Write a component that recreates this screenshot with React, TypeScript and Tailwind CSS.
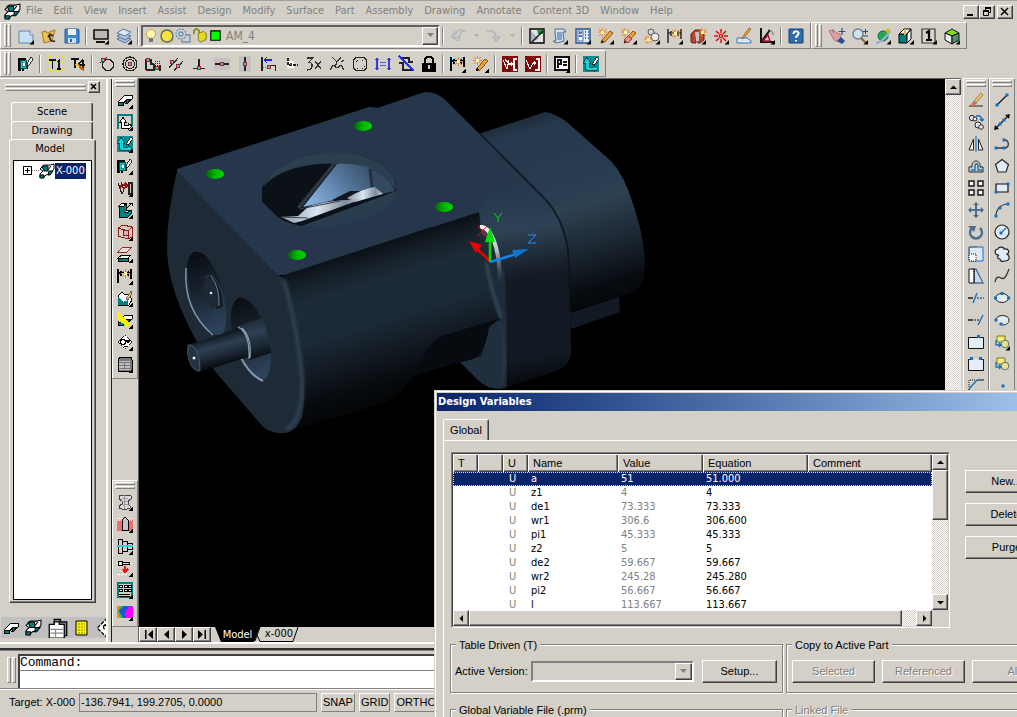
import type { ReactNode } from "react";

const RAISED =
  "border border-t-white border-l-white border-b-[#404040] border-r-[#404040] shadow-[inset_-1px_-1px_0_#808080] bg-[#d4d0c8]";
const CHECKER =
  "bg-[conic-gradient(#fff_25%,#d4d0c8_0_50%,#fff_0_75%,#d4d0c8_0)] bg-[length:2px_2px]";
const UI = "font-['DejaVu_Sans_Condensed','Noto_Sans',sans-serif]";
const SANS = "font-['Liberation_Sans',sans-serif]";

const T = "#008080";
const B = "#1472c4";
const S = "#4a6d94";

const spark = (x: number, y: number) => (
  <g>
    <path
      d={`M${x - 4} ${y}h9M${x} ${y - 4}v9M${x - 3} ${y - 3}l7 7M${x + 4} ${y - 3}l-7 7`}
      stroke="#f08020"
      fill="none"
    />
    <rect x={x - 1} y={y - 1} width="3" height="3" fill="#fff7a0" />
  </g>
);
const dot = (x: number, y: number) => (
  <g>
    <rect x={x - 2} y={y - 2} width="4" height="4" fill="#b02020" />
    <rect x={x - 1} y={y - 1} width="2" height="2" fill="#20d8e0" />
  </g>
);
const pencil = (
  <g>
    <path d="M4 12 12 3l3 2-8 9-4 1z" fill="#f0a030" stroke="#6b4010" strokeWidth=".8" />
    <path d="M3 15l1-3 2 2z" fill="#111" />
  </g>
);
const node = (x: number, y: number) => <rect x={x - 1.5} y={y - 1.5} width="3" height="3" fill={B} />;
const slab = (
  <g stroke="#000">
    <path d="M1 10 8 3h7v4l-3 1-2-1-4 5H1z" fill="#fff" />
    <path d="M1 10h5v3H1zM10 7h4l-3 4h-2z" fill={T} />
  </g>
);

const ICONS: Record<string, ReactNode> = {
  app: (
    <g stroke="#000">
      <path d="M1 6l4-4h6l4-1v5l-4 5-4 1-3 3-3-1v-3l3-3z" fill="#fff" />
      <path d="M3 3h6v5H5zM1 12h4v3H1zM10 8h4l-3 4h-2z" fill={T} />
      <path d="M8 8l4-5" />
    </g>
  ),
  new: (
    <g>
      <path d="M1 3h11l3 4v8H1z" fill="#c9dff2" stroke="#5f86b3" />
      <path d="M12 3v4h3" fill="#fff" stroke="#5f86b3" />
    </g>
  ),
  open: (
    <g>
      <path d="M1 4l4-1 1 2 8-3-3 11-8 2z" fill="#e8bf5a" stroke="#a37a1c" />
      <path d="M14 13c-4 1-6-2-5-5M7 9l2-3 3 2" stroke="#222" fill="none" strokeWidth="1.6" />
    </g>
  ),
  save: (
    <g>
      <path d="M1 1h13l1 1v13H1z" fill="#3f86cf" stroke="#2b5f9b" />
      <path d="M4 1h8v6H4z" fill="#e9f2fb" />
      <path d="M4 10h8v5H4z" fill="#cfdcea" />
      <path d="M6 11h2v3H6z" fill="#2b5f9b" />
    </g>
  ),
  screen: (
    <g>
      <path d="M1 2h14v9H1z" fill="#b8b8b0" stroke="#111" strokeWidth="1.6" />
      <path d="M3 14h9" stroke="#111" strokeWidth="2" />
    </g>
  ),
  layers: (
    <g stroke="#54779f" fill="#a9c3de">
      <path d="M1 11l6-3 8 3-6 4z" />
      <path d="M1 8l6-3 8 3-6 4z" />
      <path d="M1 5l6-4 8 3-6 4z" fill="#dbe8f5" />
    </g>
  ),
  bulb: (
    <g>
      <circle cx="8" cy="6" r="4.5" fill="#fff8b8" stroke="#c9a52a" />
      <path d="M6 10h4v4H6z" fill="#777" />
    </g>
  ),
  sun: (
    <g>
      <path d="M1 1h14v14H1z" fill="#e9c53b" opacity=".5" />
      <circle cx="8" cy="8" r="6" fill="#f9e23c" stroke="#4b6a8a" strokeWidth="1.4" />
    </g>
  ),
  freeze: (
    <g fill="none" stroke="#6f93bb" strokeWidth="1.4">
      <circle cx="6" cy="6" r="5" strokeDasharray="2 1" />
      <circle cx="6" cy="6" r="2" />
      <path d="M11 7h4v7H7v-2" />
    </g>
  ),
  unlock: (
    <g>
      <path d="M1 7V3l3-2 3 2v4" fill="none" stroke="#8a8a10" strokeWidth="2" />
      <path d="M6 6l6-2 3 2v7l-6 3-3-2z" fill="#e4d924" stroke="#77720a" />
    </g>
  ),
  green: <path d="M3 3h10v10H3z" fill="#00ff00" stroke="#000" strokeWidth="1.2" />,
  undo: (
    <path d="M1 9h8M2 9l3-6M2 9l6 4M5 7c2-5 6-6 9-4-4 0-5 4-5 10" fill="none" stroke="#b2b6be" strokeWidth="1.6" />
  ),
  redo: (
    <path d="M1 4c4-3 8-1 9 5M6 9h9M14 9l-5 5M8 9l2 5" fill="none" stroke="#b2b6be" strokeWidth="1.6" />
  ),
  sketch: (
    <g>
      <path d="M1 1h14v14H1z" fill="#e4e4e4" stroke="#000" strokeWidth="1.4" />
      <path d="M2 14V3l8 8z" fill="#aab4bc" />
      <path d="M8 2h6v4H9z" fill="#189a40" />
      <path d="M3 14 14 3" stroke="#111" strokeWidth="1.500" />
    </g>
  ),
  scroll: (
    <g>
      <path d="M3 1h9l2 3h-3l1 9-8 2-3-2h3L3 5z" fill="#cfe0f0" stroke="#4b6a94" />
      <path d="M5 5h5M5 7h5M5 9h5M5 11h5" stroke="#3464a4" />
    </g>
  ),
  calc: (
    <g>
      <path d="M1 1h14v14H1z" fill="#dcebf8" stroke="#27528f" strokeWidth="1.4" />
      <path d="M3 3h5v10H3z" fill="#fff" stroke="#3c6eb0" />
      <path d="M10 4h1M13 4h1M10 7h1M13 7h1M10 10h1M13 10h1M4 5h3M4 8h3" stroke="#1b478a" strokeWidth="1.6" />
    </g>
  ),
  pencilSpark: (
    <g>
      {pencil}
      {spark(4, 4)}
    </g>
  ),
  eraserSpark: (
    <g>
      {pencil}
      <path d="M3 12l4-4 4 3-4 4z" fill="#ef8d8d" stroke="#8a3a3a" />
      {spark(4, 4)}
    </g>
  ),
  gearSpark: (
    <g>
      <circle cx="7" cy="4" r="3" fill="#cfd8e2" stroke="#555" />
      <circle cx="11" cy="9" r="4" fill="#e6ebf0" stroke="#555" />
      {spark(4, 11)}
    </g>
  ),
  dimSpark: (
    <g>
      <path d="M1 1v14M14 1v10M1 5h13M4 3v5M11 3v5" stroke="#000" strokeWidth="1.2" />
      {spark(8, 5)}
    </g>
  ),
  partSpark: (
    <g>
      <path d="M1 14V6l4-4h6l3 4v6l-4 3H8V9L6 8v7H2z" fill="#b5472f" stroke="#6b1e12" />
      <path d="M5 4h4v9H6z" fill="#b9c3cc" />
      {spark(12, 4)}
    </g>
  ),
  burst: (
    <g stroke="#cc1515" fill="none" strokeWidth="1.5">
      <path d="M8 1v4M8 11v4M1 8h4M11 8h4M3 3l3 3M10 10l3 3M13 3l-3 3M6 10l-3 3" />
      <circle cx="8" cy="8" r="1.6" fill="#fff" />
    </g>
  ),
  draft: (
    <g>
      <path d="M1 10h10l4 3v2H1z" fill="#d7e7f6" stroke="#3f78b8" />
      <path d="M6 10 13 0l2 1-7 9-2 1z" fill="#eba74a" stroke="#8a5a18" strokeWidth=".8" />
    </g>
  ),
  compass: (
    <g fill="none">
      <path d="M2 0v14h13M2 14l9-12" stroke="#111" strokeWidth="2" />
      <path d="M4 13l5-6 2 6z" stroke="#b01030" strokeWidth="1.4" />
      <path d="M9 2c4 0 5 3 5 5" stroke="#555" />
    </g>
  ),
  help: (
    <g>
      <path d="M1 1h14v14H1z" fill="#2f6bb0" stroke="#173f74" />
      <path d="M5.500 6c0-4 6-3 5 0-.5 1.500-2.500 1.500-2.500 4M8 12v1.500" fill="none" stroke="#fff" strokeWidth="2" />
    </g>
  ),
  hand: (
    <g>
      <path d="M0 3l2-1 3 3-2-4 5 4 3 1 1 4-3 4-4-2z" fill="#d9a0a0" stroke="#a56a72" strokeWidth=".8" />
      <path d="M8 13l4-4 4 4-3 3z" fill="#27518d" />
      <path d="M13 0v7M9.500 3.500h7" stroke="#33527a" strokeWidth="1.2" />
    </g>
  ),
  zoom: (
    <g>
      <circle cx="6" cy="6" r="5" fill="#cfe4f5" stroke="#70808e" strokeWidth="1.4" />
      <path d="M9 10l5 5" stroke="#a06a2c" strokeWidth="2.4" />
      <path d="M13.500 1v5M11 3.500h5M11 8h5" stroke="#1e4f94" />
    </g>
  ),
  orbit: (
    <g>
      <circle cx="8" cy="8" r="5" fill="#27a55c" stroke="#126b38" />
      <path d="M1 15c4 0 12-7 14-12" fill="none" stroke="#8fb1d6" strokeWidth="2.200" />
      <circle cx="13" cy="3" r="2.400" fill="#d8b32a" />
    </g>
  ),
  shade: (
    <g stroke="#000">
      <path d="M1 6h8v9H1z" fill={T} />
      <path d="M1 6l5-5h7l-4 5zM9 6l4-5v10l-4 4z" fill="#fff" />
      <path d="M7 1v6" stroke="#d8c020" strokeWidth="2" />
    </g>
  ),
  one: (
    <g>
      <path d="M1 1h13v14H1z" fill="#d8d4cc" stroke="#333" strokeWidth="1.2" />
      <path d="M5 5l3-2v9M5 12h6" fill="none" stroke="#000" strokeWidth="2.200" />
    </g>
  ),
  cube: (
    <g stroke="#111">
      <path d="M1 5l7-4 7 4-7 3z" fill="#7fdc1e" />
      <path d="M1 5l7 3v8l-7-4z" fill="#eee" />
      <path d="M8 8l7-3v7l-7 4z" fill="#4f8f70" />
    </g>
  ),
  blockPen: (
    <g>
      <path d="M8 3H1v11h2M9 6v6H5v3" fill="none" stroke="#000" strokeWidth="1.200" />
      <path d="M2 4h6v8H2z" fill="#17c5cf" stroke="#055" />
      <path d="M4 6h3v4H4z" fill="#fff" stroke="#055" strokeWidth=".6" />
      <path d="M9 7l4-6 2 2-4 6-2 1z" fill="#fff" stroke="#000" strokeWidth=".8" />
    </g>
  ),
  t1: (
    <g>
      <path d="M0 1h16M0 15h16M1 0v16M15 0v16" stroke="#e8e020" strokeDasharray="1 2" strokeWidth="2" />
      <path d="M2 4h7M5.500 4v9M10 6l2-2v9M10 13h4" fill="none" stroke="#111" strokeWidth="1.300" />
    </g>
  ),
  t4: (
    <g>
      <path d="M1 3h8M5 3v9M8 9h7M13 4v9M8 9l5-6" fill="none" stroke="#111" strokeWidth="1.300" />
      <path d="M6 8l8 6" stroke="#c25a16" strokeWidth="2.400" />
      <path d="M6 8l3 3" stroke="#e8d020" strokeWidth="1.500" />
    </g>
  ),
  tangent: (
    <g>
      <circle cx="9" cy="9" r="5.500" fill="none" stroke="#222" strokeWidth="1.300" />
      <path d="M1 7l7-6" stroke="#222" />
      {dot(4, 4)}
    </g>
  ),
  concentric: (
    <g>
      <circle cx="8" cy="8" r="7" fill="none" stroke="#222" strokeWidth="1.200" />
      <circle cx="8" cy="8" r="4.400" fill="none" stroke="#222" strokeWidth="1.200" />
      {dot(8, 8)}
    </g>
  ),
  profile: (
    <g>
      <path d="M1 14V4h5v4h3M9 8v6H1M15 9v6" fill="none" stroke="#222" strokeWidth="1.300" />
      <path d="M10 5h6M10 7h6M10 9h6" stroke="#1724c8" strokeDasharray="1 1" />
      {dot(3, 4)}
      {dot(12, 12)}
    </g>
  ),
  parallel: (
    <g>
      <path d="M1 12 10 2M6 15l9-10" stroke="#222" strokeWidth="1.300" />
      {dot(4, 6)}
      {dot(10, 10)}
    </g>
  ),
  perp: (
    <g>
      <path d="M8 3v9M2 12.500h12" stroke="#222" strokeWidth="1.300" />
      {dot(8, 12)}
    </g>
  ),
  horiz: (
    <g>
      <path d="M0 2h16v12H0z" fill="#c2c2c2" />
      <path d="M1 8h14" stroke="#222" strokeWidth="1.600" />
      {dot(8, 8)}
    </g>
  ),
  vert: (
    <g>
      <path d="M2 0h12v16H2z" fill="#c2c2c2" />
      <path d="M8 1v14" stroke="#222" strokeWidth="1.600" />
      {dot(8, 8)}
    </g>
  ),
  project: (
    <g fill="none">
      <path d="M2 1v14" stroke="#222" strokeWidth="1.400" />
      <path d="M4 4h8M4 4l3-3M4 4l3 3" stroke="#1724e8" strokeWidth="1.300" />
      <path d="M10 9h5v6" stroke="#222" />
      <path d="M3 11h5" stroke="#18b030" strokeDasharray="1 1" />
      {dot(9, 11)}
    </g>
  ),
  coincident: (
    <g>
      <path d="M4 5h7v7H4z" fill="#fff" />
      <path d="M5 2v7h10" fill="none" stroke="#222" strokeDasharray="3 1" strokeWidth="1.300" />
      <path d="M7 7h2v2H7z" fill="#444" />
    </g>
  ),
  bx: <path d="M1 2h6L3 6c4 0 5 8-2 8M9 5l6 8M15 5l-6 8" fill="none" stroke="#333" strokeWidth="1.300" />,
  curve: (
    <path d="M1 14l3-5 4 3 4-3 3 5M3 1l5 5 4-5M8 6l-2 5M12 6l3-2" fill="none" stroke="#333" strokeWidth="1.300" />
  ),
  fillet: (
    <g fill="none" stroke="#222">
      <rect x="1.500" y="1.500" width="13" height="13" rx="4" strokeWidth="1.300" />
      <path d="M5 4h1M10 4h1M4 5v1M12 10v1M5 12h1M10 12h1" />
    </g>
  ),
  equal: (
    <g>
      <path d="M2 2v12M14 2v12M0 4l2-2 2 2M12 4l2-2 2 2M0 12l2 2 2-2M12 12l2 2 2-2" fill="none" stroke="#333fd8" strokeWidth="1.200" />
      <path d="M5 6.500h6M5 9.500h6" stroke="#5661e0" strokeWidth="1.300" />
    </g>
  ),
  mirrorCut: (
    <g fill="none">
      <path d="M3 2h8v4h4M1 7h4v7h8v-3" stroke="#222" strokeWidth="1.200" />
      <path d="M1 0l15 15" stroke="#2230e0" strokeWidth="1.600" />
    </g>
  ),
  lock: (
    <g>
      <path d="M4 8V4c0-4 8-4 8 0v4" fill="none" stroke="#000" strokeWidth="2" />
      <path d="M1 7h14v9H1z" fill="#000" />
      <path d="M7 9h2v4H7z" fill="#d4d0c8" />
    </g>
  ),
  redA: (
    <g>
      <path d="M0 0h16v16H0z" fill="#820808" />
      <path d="M1 4l4 9 2-9M3 3l4 5h4M9 6l2 2-2 2M15 3h-3v11h3" fill="none" stroke="#fff" strokeWidth="1.100" />
    </g>
  ),
  redB: (
    <g>
      <path d="M0 0h16v16H0z" fill="#820808" />
      <path d="M1 4l4 9 3-6h3M9 5l2 2-2 2M11 3h3v11h-4" fill="none" stroke="#fff" strokeWidth="1.100" />
    </g>
  ),
  pEq: (
    <g>
      <path d="M1 1h14v13H1z" fill="#fff" stroke="#111" strokeWidth="1.200" />
      <path d="M4 12V4h3v4H4M9 6h4M9 9h4" fill="none" stroke="#111" strokeWidth="1.200" />
    </g>
  ),
  axesPen: (
    <g>
      <path d="M0 0h16v16H0z" fill="#0b8f93" />
      <path d="M2 13V7H0l4-6 4 6H6v4h5V9l4 4-4 3v-2H4z" fill="#17d0dc" stroke="#033" strokeWidth=".8" />
      <path d="M9 8l5-7 2 2-5 6z" fill="#fff" stroke="#000" strokeWidth=".8" />
    </g>
  ),
  slab,
  axes: (
    <g>
      <path d="M1 15V1h14v11" fill="none" stroke={T} strokeWidth="1.400" />
      <path d="M3 8l3-5 3 5H7v3h4V9l4 3-4 4v-2H4V8z" fill="#fff" stroke="#000" />
    </g>
  ),
  swirl: (
    <g fill="none">
      <path d="M1 3l4 11 2-4-3-8M12 3h3v11h-3z" stroke="#222" strokeWidth="1.200" />
      <path d="M3 9c0-5 4-5 7-3M8 3l3 3-4 2" stroke="#9a1010" strokeWidth="1.800" />
    </g>
  ),
  extrude: (
    <g stroke="#000">
      <path d="M2 4l3-3h4v7h5v4l-3 3H2z" fill={T} />
      <path d="M2 4l3-3h4L7 4zM7 10h4l3-2" fill="#fff" />
      <path d="M9 7l6-6M12 1h3v3" fill="none" />
    </g>
  ),
  hole: (
    <g fill="none" stroke="#901515">
      <path d="M1 4l5-3 9 2v10l-4 2-10-3zM1 4l10 3v8M11 7l4-4" />
      <circle cx="9" cy="9" r="3" fill="#d8b8b0" />
    </g>
  ),
  plane: (
    <g>
      <path d="M1 6l5-5h9l-5 5z" fill="#f6dcdc" stroke="#a02020" />
      <path d="M1 12l4-3h9l-3 3z" fill="#fff" stroke="#000" />
      <path d="M1 12h10v3H1z" fill={T} stroke="#000" />
    </g>
  ),
  checkPen: (
    <g>
      <path d="M1 14V6l4-4 3 3 4-1 3 6-3 5H1z" fill="#fff" stroke="#000" />
      <path d="M1 14V7l5 5 5-2v5H1z" fill={T} />
      <path d="M9 9l5-8 1 2-4 7z" fill="#e6d426" stroke="#603a80" strokeWidth=".8" />
    </g>
  ),
  slabYellow: (
    <g>
      {slab}
      <path d="M0 1l2-1 11 12-3 3L0 7z" fill="#fff200" />
    </g>
  ),
  eye: (
    <g>
      <path d="M8 1l7 7-7 7-7-7z" fill="#fff" stroke="#222" strokeDasharray="2 1" />
      <circle cx="6" cy="8" r="2.400" fill="none" stroke="#000" />
      <path d="M8 6h6l-3 3zM7 12h3M4 5h4" fill="#000" stroke="#000" />
    </g>
  ),
  gray: (
    <g>
      <path d="M1 3l3-2h10l1 3v11H1z" fill="#7a7a7a" stroke="#000" />
      <path d="M2 5h11v9H2z" fill="#c0c0c0" />
      <path d="M2 6h11M2 9h11M2 12h11M7 6v8" stroke="#777" />
    </g>
  ),
  bolt: (
    <g stroke="#444" fill="#d9d9d9">
      <path d="M2 2l3-1h6l3 1v3l-3 2v3l2 2v2l-3 1H5l-3-1v-2l3-2V7L2 5z" />
      <path d="M5 4h6M5 7h6M5 10h6M7 1v14" stroke="#999" />
    </g>
  ),
  pinHole: (
    <g>
      <path d="M0 4h16v11H0z" fill="#ef6e6e" />
      <path d="M0 2h16M0 4h16" fill="none" stroke="#fff" strokeDasharray="1 1" />
      <path d="M5 14V4l3-3 3 3v10z" fill="#c4c4c4" stroke="#000" />
    </g>
  ),
  shaft: (
    <g stroke="#000" fill="#cfcfcf">
      <path d="M1 1h4v14H1zM5 3h5v10H5zM10 5h5v6h-5z" />
      <path d="M0 8h16" stroke="#28d8d8" strokeWidth="2" />
    </g>
  ),
  screw: (
    <g>
      <path d="M0 3h16M0 14h10" stroke="#fff" strokeDasharray="3 1" />
      <path d="M1 1h4v4H1zM5 2h7v2H5z" fill="#ddd" stroke="#000" />
      <path d="M8 6v5M6 9l2 3 3-3" fill="none" stroke="#f01010" strokeWidth="2" />
    </g>
  ),
  gridRows: (
    <g>
      <path d="M1 1h14v14H1z" fill="#d4d0c8" stroke={T} strokeWidth="1.400" />
      <path d="M2 3h3v2H2zM7 3h3v2H7zM11 3h3v2h-3zM2 7h3v2H2zM7 7h3v2H7zM11 7h3v2h-3z" fill="#fff" stroke="#000" />
      <path d="M2 12h11M2 14h11" stroke="#000" />
    </g>
  ),
  fea: (
    <g>
      <path d="M0 2h16v12H0z" fill="#1d55d8" />
      <path d="M0 2h6L2 7l4 7H0z" fill="#2fc23c" />
      <path d="M0 2h3L1 7l2 7H0z" fill="#f08a1c" />
      <path d="M9 14c-2-5 0-12 7-12v12z" fill="#ff00ff" />
    </g>
  ),
  erase: (
    <g>
      <path d="M1 14h14" stroke="#222" />
      <path d="M6 9 13 1l2 2-7 8z" fill="#e4c26a" stroke="#8a6a20" strokeWidth=".7" />
      <path d="M3 12l3-3 3 2-3 3H4z" fill="#e86a5a" />
      <path d="M5.500 9.500l3 2" stroke="#5f86b3" strokeWidth="1.500" />
    </g>
  ),
  copy: (
    <g fill="#e8f1fa" stroke="#222">
      <circle cx="4" cy="4" r="2.600" />
      <circle cx="7" cy="5" r="2" />
      <circle cx="10" cy="11" r="3" />
      <circle cx="13" cy="13" r="2.300" />
      <path d="M8 2c4-1 6 1 6 5M12 5l2 2 2-2" fill="none" stroke={B} strokeWidth="1.400" />
    </g>
  ),
  mirror: (
    <g fill="#f4f8fc" stroke="#222">
      <path d="M5.500 3v11H1zM10.500 3v11H15z" />
      <path d="M8 0v16" stroke={B} strokeWidth="1.200" />
    </g>
  ),
  offset: (
    <g fill="none">
      <path d="M1 14V9h3c-1-8 9-8 8 0h3v5z" stroke="#222" />
      <path d="M3 12h4V8c0-3 3-3 3 0v4h4" stroke={B} strokeWidth="1.400" />
    </g>
  ),
  array: <path d="M1 1h5v5H1zM10 1h5v5h-5zM1 10h5v5H1zM10 10h5v5h-5z" fill="#f4f8fc" stroke="#111" strokeWidth="1.400" />,
  move: (
    <path d="M8 0l3 3H9v4h4V5l3 3-3 3V9H9v4h2l-3 3-3-3h2V9H3v2L0 8l3-3v2h4V3H5z" fill={S} />
  ),
  rotate: (
    <g>
      <path d="M4 4a6 6 0 1 0 8 0" fill="none" stroke={S} strokeWidth="2.400" />
      <path d="M0 2h8L6 8z" fill={S} />
    </g>
  ),
  scale: (
    <g>
      <path d="M1 1h14v14H1z" fill="#dce8f3" stroke={B} />
      <path d="M1 8h7v7H1z" fill="#fff" stroke="#111" strokeDasharray="1 1" />
      <path d="M1 8V1h8" fill="none" stroke="#666" />
    </g>
  ),
  stretch: (
    <g>
      <path d="M6 1h2l7 14H6z" fill="#c6d8ea" stroke={S} strokeWidth="1.300" />
      <path d="M1 1h5v14H1z" fill="#fff" stroke="#111" />
      <path d="M6 1v14" stroke="#111" strokeDasharray="1 1" />
    </g>
  ),
  trim: (
    <g>
      <path d="M0 8h5" stroke="#111" strokeWidth="1.400" />
      <path d="M9 8h7" stroke={B} strokeWidth="1.400" strokeDasharray="2 1" />
      <path d="M5 13l4-10" stroke={B} strokeWidth="1.400" />
    </g>
  ),
  extend: (
    <g>
      <path d="M0 8h5" stroke="#111" strokeWidth="1.400" />
      <path d="M6 8h6" stroke="#111" strokeDasharray="2 1" />
      <path d="M10 13l5-10" stroke={B} strokeWidth="1.400" />
    </g>
  ),
  break1: (
    <g>
      <path d="M.5 3.500h15v11H.5z" fill="#e4edf5" stroke="#111" />
      {node(10.500, 2.500)}
    </g>
  ),
  break2: (
    <g>
      <path d="M4 3.500H.5v11h15v-11H12" fill="#e4edf5" stroke="#111" />
      {node(3.500, 2.500)}
      {node(12.500, 2.500)}
    </g>
  ),
  chamfer: (
    <g fill="none">
      <path d="M1 11l8-9" stroke={B} strokeWidth="1.400" />
      <path d="M1 9V2h7" stroke="#111" strokeDasharray="1 1" />
      <path d="M1 11v5M9 2h7" stroke="#111" strokeWidth="1.200" />
    </g>
  ),
  line: (
    <g>
      <path d="M3 13 13 3" stroke="#111" strokeWidth="1.300" />
      {node(3, 13)}
      {node(13, 3)}
    </g>
  ),
  xline: (
    <g>
      <path d="M2 14 14 2" stroke="#111" strokeWidth="1.300" />
      <path d="M0 16l1-5 4 4zM16 0l-5 1 4 4z" fill="#111" />
      {node(6, 10)}
      {node(10, 6)}
    </g>
  ),
  pline: (
    <g fill="none">
      <path d="M10 4c5-1 6 7 1 8H2" stroke="#333" strokeWidth="1.300" />
      {node(10, 4)}
      {node(2, 12)}
      {node(10, 12)}
    </g>
  ),
  polygon: <path d="M8 1.500l6.500 5L12 14H4L1.500 6.500z" fill="#e1ecf6" stroke="#222" strokeWidth="1.200" />,
  rect: (
    <g>
      <path d="M2 4h12v8H2z" fill="#e1ecf6" stroke="#111" strokeWidth="1.200" />
      {node(2, 12)}
      {node(14, 4)}
    </g>
  ),
  arc: (
    <g>
      <path d="M2 14C2 7 7 2 14 2" fill="none" stroke="#333" strokeWidth="1.200" />
      {node(2, 14)}
      {node(6, 6)}
      {node(14, 2)}
    </g>
  ),
  circle: (
    <g>
      <circle cx="8" cy="8" r="7" fill="#e1ecf6" stroke="#222" strokeWidth="1.200" />
      <path d="M8 8l4-4" stroke={B} strokeWidth="1.300" />
      {node(7, 9)}
    </g>
  ),
  cloud: (
    <path d="M5 9C0 9 0 3 4 3c1-3 6-2 6 0 5-1 6 4 3 5 4 3 2 7-2 7-3 1-5 0-5-2-3 0-3-3-1-4z" fill="#e1ecf6" stroke="#222" strokeWidth="1.200" />
  ),
  spline: <path d="M1 14c1-5 3-6 6-4s5-1 8-9" fill="none" stroke="#333" strokeWidth="1.200" />,
  ellipse: (
    <g>
      <ellipse cx="8" cy="8" rx="6.500" ry="4.500" fill="#e1ecf6" stroke="#222" />
      {node(1.500, 8)}
      {node(14.500, 8)}
      {node(8, 3.500)}
    </g>
  ),
  ellipseArc: (
    <g>
      <path d="M2 8c0-6 13-6 13 0 0 4-4 5-7 5" fill="#e1ecf6" stroke="#222" />
      {node(2, 8)}
      {node(7, 12)}
    </g>
  ),
  block: (
    <g>
      <path d="M3 2h8v6H3z" fill="#f5ec80" stroke="#7a7420" />
      <circle cx="11" cy="10" r="3.800" fill="#e8e48a" stroke="#52707a" />
      <path d="M2 6v5h5M5 9l2 2-2 2" fill="none" stroke={B} strokeWidth="1.300" />
    </g>
  ),
  point: node(9, 8),
  yellowDoc: (
    <g>
      <path d="M2 1h11v14H2z" fill="#fff200" stroke="#000" />
      <path d="M4 4h7M4 7h7M4 10h7M4 13h7" stroke="#8a8000" strokeDasharray="2 1" />
    </g>
  ),
  browserTable: (
    <g stroke="#000">
      <path d="M5 1h5v2h5v11H5z" fill="#808080" />
      <path d="M1 5h4V3h4v2h4v11H1z" fill="#fff" />
      <path d="M2 9h10M2 12h10M6 9v6" stroke="#888" />
    </g>
  ),
  magnify: (
    <g>
      <path d="M9 0 1 8l8 8 7-8z" fill="#fff" stroke="#000" strokeDasharray="3 1" />
      <path d="M7 6h4M9 9a2 2 0 1 0-2 0" fill="none" stroke="#000" />
    </g>
  ),
};

function Icon({
  name,
  fly = false,
  crisp = false,
  size = "size-4",
}: {
  name: string;
  fly?: boolean;
  crisp?: boolean;
  size?: string;
}) {
  return (
    <svg
      viewBox="0 0 16 16"
      className={`${size} shrink-0 overflow-visible ${crisp ? "[shape-rendering:crispEdges]" : ""}`}
      aria-hidden="true"
    >
      {ICONS[name]}
      {fly && <path d="M16 12v4.500h-4.500z" fill="#000" />}
    </svg>
  );
}

type Item = "|" | [icon: string, label: string, fly?: boolean];

const Sep = () => <span className="mx-[2px] h-[18px] w-[2px] shrink-0 border-l border-[#808080] border-r border-r-white" />;

const Grip = () => (
  <span className="flex w-[13px] shrink-0 gap-[1px] pl-[3px]" aria-hidden="true">
    <span className="h-[23px] w-[3px] border border-t-white border-l-white border-r-[#808080] border-b-[#808080]" />
    <span className="h-[23px] w-[3px] border border-t-white border-l-white border-r-[#808080] border-b-[#808080]" />
  </span>
);

const GripH = () => (
  <span className="flex flex-col gap-[1px]" aria-hidden="true">
    <span className="h-[3px] border border-t-white border-l-white border-r-[#808080] border-b-[#808080]" />
    <span className="h-[3px] border border-t-white border-l-white border-r-[#808080] border-b-[#808080]" />
  </span>
);

const Tools = ({ items, crisp }: { items: Item[]; crisp?: boolean }) => (
  <>
    {items.map((it, i) =>
      it === "|" ? (
        <Sep key={i} />
      ) : (
        <button key={i} type="button" aria-label={it[1]} className="flex h-[23px] w-[23px] shrink-0 items-center justify-center">
          <Icon name={it[0]} fly={it[2]} crisp={crisp} />
        </button>
      ),
    )}
  </>
);

const Bar = ({ children }: { children: ReactNode }) => (
  <div className="flex h-[27px] shrink-0 items-center border border-t-white border-l-white border-r-[#808080] border-b-[#808080] pr-[3px]">
    <Grip />
    {children}
  </div>
);

const Column = ({ items, crisp }: { items: Item[]; crisp?: boolean }) => (
  <div className="w-[26px] shrink-0 border border-t-white border-l-white border-r-[#808080] border-b-[#808080] px-[2px] pb-[3px]">
    <div className="h-[10px] pt-[1px]">
      <GripH />
    </div>
    {items.map((it, i) =>
      it === "|" ? null : (
        <button key={i} type="button" aria-label={it[1]} className="flex h-[22px] w-full items-center justify-center">
          <Icon name={it[0]} fly={it[2]} crisp={crisp} />
        </button>
      ),
    )}
  </div>
);

const MENUS = [
  "File", "Edit", "View", "Insert", "Assist", "Design", "Modify", "Surface", "Part",
  "Assembly", "Drawing", "Annotate", "Content 3D", "Window", "Help",
];

const FILE_TOOLS: Item[] = [
  ["new", "New", true], ["open", "Open"], ["save", "Save"], "|",
  ["screen", "Display", true], ["layers", "Layers", true], "|",
];
const MAIN_TOOLS: Item[] = [
  "|", ["sketch", "Sketch"], ["scroll", "Script", true], ["calc", "Calculator", true],
  ["pencilSpark", "Edit sketch", true], ["eraserSpark", "Power erase", true], ["gearSpark", "Power edit", true],
  ["dimSpark", "Power dimension", true], ["partSpark", "Part", true], ["burst", "Explode", true],
  ["draft", "Drafting"], ["compass", "Construction", true], "|", ["help", "Help"],
];
const VIEW_TOOLS: Item[] = [
  ["hand", "Pan"], ["zoom", "Zoom", true], ["orbit", "Orbit", true],
  ["shade", "Shade", true], ["one", "Single view", true], ["cube", "Isometric view", true],
];
const CONSTRAINTS: Item[] = [
  ["blockPen", "New sketch"], "|", ["t1", "Text"], ["t4", "Edit text"], "|",
  ["tangent", "Tangent"], ["concentric", "Concentric"], ["profile", "Profile"], ["parallel", "Parallel"],
  ["perp", "Perpendicular"], ["horiz", "Horizontal"], ["vert", "Vertical"], ["project", "Project"],
  ["coincident", "Coincident"], ["bx", "X value"], ["curve", "Smooth"], ["fillet", "Radius"],
  ["equal", "Equal length"], ["mirrorCut", "Mirror"], ["lock", "Fix"], "|",
  ["dimSpark", "Dimension", true], ["pencilSpark", "Draw", true], "|",
  ["redA", "Show constraints"], ["redB", "Delete constraints"], "|",
  ["pEq", "Parameters", true], "|", ["axesPen", "Work plane"],
];
const PART_TOOLS: Item[] = [
  ["slab", "Part modeling", true], ["axes", "Work features", true], ["axesPen", "Sketch plane", true],
  ["blockPen", "Sketch", true], ["swirl", "Constraints", true], ["extrude", "Extrude", true],
  ["hole", "Hole", true], ["plane", "Plane", true], ["dimSpark", "Dimension", true],
  ["checkPen", "Edit feature", true], ["slabYellow", "Update part", true], ["eye", "Visibility", true], ["gray", "Options", true],
];
const CONTENT_TOOLS: Item[] = [
  ["bolt", "Fasteners", true], ["pinHole", "Holes", true], ["shaft", "Shafts", true],
  ["screw", "Screw connection", true], ["gridRows", "Parts list", true], ["fea", "Analysis", true],
];
const MODIFY_TOOLS: Item[] = [
  ["erase", "Erase"], ["copy", "Copy"], ["mirror", "Mirror"], ["offset", "Offset"], ["array", "Array"],
  ["move", "Move"], ["rotate", "Rotate"], ["scale", "Scale"], ["stretch", "Stretch"], ["trim", "Trim"],
  ["extend", "Extend"], ["break1", "Break at point"], ["break2", "Break"], ["chamfer", "Chamfer"],
];
const DRAW_TOOLS: Item[] = [
  ["line", "Line"], ["xline", "Construction line"], ["pline", "Polyline"], ["polygon", "Polygon"], ["rect", "Rectangle"],
  ["arc", "Arc"], ["circle", "Circle"], ["cloud", "Revision cloud"], ["spline", "Spline"], ["ellipse", "Ellipse"],
  ["ellipseArc", "Ellipse arc"], ["block", "Insert block", true], ["block", "Make block"], ["point", "Point"],
];

const ROWS = [
  ["a", "51", "51.000"],
  ["z1", "4", "4"],
  ["de1", "73.333", "73.333"],
  ["wr1", "306.6", "306.600"],
  ["pi1", "45.333", "45.333"],
  ["z2", "5", "5"],
  ["de2", "59.667", "59.667"],
  ["wr2", "245.28", "245.280"],
  ["pi2", "56.667", "56.667"],
  ["l", "113.667", "113.667"],
];

const ARROWS = {
  up: "M4 9h7L7.500 5.500z",
  down: "M4 6h7L7.500 9.500z",
  left: "M9 4v7L5.500 7.500z",
  right: "M6 4v7l3.500-3.500z",
  first: "M4 3h1.500v9H4zM12 3v9L7 7.500z",
  prev: "M10 3v9L5 7.500z",
  next: "M5 3v9l5-4.500z",
  last: "M3 3v9l5-4.500zM9.500 3H11v9H9.500z",
};

function ArrowButton({ dir, label, className }: { dir: keyof typeof ARROWS; label: string; className: string }) {
  return (
    <button type="button" aria-label={label} className={`flex shrink-0 items-center justify-center ${RAISED} ${className}`}>
      <svg viewBox="0 0 15 15" className="size-[15px] shrink-0" aria-hidden="true">
        <path d={ARROWS[dir]} />
      </svg>
    </button>
  );
}

function Model3D() {
  return (
    <svg viewBox="139 79 806 547" className="block h-[547px] w-[806px] shrink-0" role="img" aria-label="Pump housing model">
      <defs>
        <linearGradient id="rear" gradientUnits="userSpaceOnUse" x1="540" y1="112" x2="600" y2="312">
          <stop offset="0" stopColor="#1d2b38" />
          <stop offset=".07" stopColor="#26384c" />
          <stop offset=".35" stopColor="#283b50" />
          <stop offset=".48" stopColor="#2e4152" />
          <stop offset=".68" stopColor="#1d2934" />
          <stop offset=".88" stopColor="#080c11" />
          <stop offset="1" stopColor="#030507" />
        </linearGradient>
        <linearGradient id="flange" gradientUnits="userSpaceOnUse" x1="515" y1="185" x2="545" y2="385">
          <stop offset="0" stopColor="#26374c" />
          <stop offset=".12" stopColor="#293c51" />
          <stop offset=".22" stopColor="#2f4255" />
          <stop offset=".36" stopColor="#1e2a37" />
          <stop offset=".46" stopColor="#131a23" />
          <stop offset=".85" stopColor="#121922" />
          <stop offset="1" stopColor="#05080b" />
        </linearGradient>
        <linearGradient id="barrel" gradientUnits="userSpaceOnUse" x1="370" y1="247" x2="414" y2="390">
          <stop offset="0" stopColor="#0b1117" />
          <stop offset=".13" stopColor="#17222c" />
          <stop offset=".24" stopColor="#1d2b38" />
          <stop offset=".5" stopColor="#1b2936" />
          <stop offset=".7" stopColor="#121a22" />
          <stop offset=".88" stopColor="#080b0f" />
          <stop offset="1" stopColor="#040608" />
        </linearGradient>
        <linearGradient id="bore" x1="0" y1="0" x2=".2" y2="1">
          <stop offset="0" stopColor="#080b10" />
          <stop offset=".5" stopColor="#18222d" />
          <stop offset="1" stopColor="#2d4159" />
        </linearGradient>
        <linearGradient id="pin" gradientUnits="userSpaceOnUse" x1="213" y1="333" x2="222" y2="366">
          <stop offset="0" stopColor="#070b10" />
          <stop offset=".4" stopColor="#2d4053" />
          <stop offset=".7" stopColor="#1c2835" />
          <stop offset="1" stopColor="#06090c" />
        </linearGradient>
        <linearGradient id="pin2" gradientUnits="userSpaceOnUse" x1="250" y1="318" x2="260" y2="360">
          <stop offset="0" stopColor="#1b2733" />
          <stop offset=".35" stopColor="#2d4053" />
          <stop offset=".7" stopColor="#1a2531" />
          <stop offset="1" stopColor="#05080b" />
        </linearGradient>
        <linearGradient id="blade" gradientUnits="userSpaceOnUse" x1="315" y1="205" x2="365" y2="165">
          <stop offset="0" stopColor="#86aedb" />
          <stop offset=".5" stopColor="#5a7da4" />
          <stop offset="1" stopColor="#3a536d" />
        </linearGradient>
        <linearGradient id="lobe" x1="0" y1="0" x2="1" y2="0">
          <stop offset="0" stopColor="#8b98a8" />
          <stop offset=".45" stopColor="#dbe6f2" />
          <stop offset=".8" stopColor="#7d8a9a" />
          <stop offset="1" stopColor="#c6ced8" />
        </linearGradient>
        <linearGradient id="glow" gradientUnits="userSpaceOnUse" x1="484" y1="225" x2="500" y2="285">
          <stop offset="0" stopColor="#fff" />
          <stop offset=".45" stopColor="#b9c2cb" />
          <stop offset="1" stopColor="#34485b" stopOpacity="0" />
        </linearGradient>
        <linearGradient id="lip" gradientUnits="userSpaceOnUse" x1="348" y1="208" x2="354" y2="226">
          <stop offset="0" stopColor="#2b3f4f" />
          <stop offset="1" stopColor="#26374c" />
        </linearGradient>
        <linearGradient id="hole" x1="0" y1="0" x2="1" y2="0">
          <stop offset="0" stopColor="#006a00" />
          <stop offset=".5" stopColor="#00b400" />
          <stop offset="1" stopColor="#00d800" />
        </linearGradient>
        <filter id="soft" x="-50%" y="-10%" width="200%" height="120%">
          <feGaussianBlur stdDeviation="1.800" />
        </filter>
      </defs>
      <path d="M570 313l49-16 1 15-49 17z" fill="#121922" />
      <path d="M478 134l67-22q10 1 23 11l44 39q13 15 21 42 11 32 12 58 0 25-11 30l-64 21-80-100z" fill="url(#rear)" />
      <path d="M369 107l9 1 47-16q10 0 18 6l102 101q16 17 22 45 3 15 3 40l1 70q-1 10-12 16l-59 19q-10 1-22-9l-18-18-40-180z" fill="url(#flange)" />
      <path d="M480 134l65 65q16 17 22 45 3 15 3 66" fill="none" stroke="#0a1016" strokeWidth="2" opacity=".7" />
      <path d="M486 318l16 3 4 40-3 27q-14 3-25-8l-18-18 22-6z" fill="#202f3d" />
      <path d="M502 270q3 50 3 118" fill="none" stroke="#2a3a4a" strokeWidth="3" filter="url(#soft)" />
      <path d="M283 275l196-63 3 24 19 82-60 19q-10 8-18 24-12 20-25 33l-14 9-101 30z" fill="url(#barrel)" />
      <path d="M501 318l-62 19q-10 8-17 22l-9 17 47-14q14-1 21-9 6-10 8-26z" fill="#070a0e" />
      <path d="M479 232q4 50 22 90l4-2q0-50-10-76z" fill="#1e2b38" />
      <path d="M486 262q6 30 15 56" fill="none" stroke="#33485c" strokeWidth="3" filter="url(#soft)" />
      <path d="M177 169l192-62 9 1 47-16q10 0 18 6l60 60-25 54-194 63h-7L177 174z" fill="#26374c" />
      <path d="M177 171l100 104 6 2q10 35 16 75 8 40 3 65-7 18-24 16-12-1-20-12-26-30-44-51-47-72-47-122 0-35 10-77z" fill="#1e2b37" />
      <path d="M284 280q10 35 15 72 6 35 1 55-4 18-14 22" fill="none" stroke="#2d4052" strokeWidth="4" filter="url(#soft)" />
      <path d="M187 264q2-9 7-12 6-1 13 5 15 20 19 48 2 27-6 31-12-3-24-21-8-25-9-51z" fill="url(#bore)" />
      <path d="M186 268q-3 42 27 67" fill="none" stroke="#8093ab" strokeWidth="1.500" />
      <path d="M205 277l6-2q11 8 13 32l-8 3z" fill="#111922" stroke="#304255" />
      <ellipse cx="211" cy="293" rx="7" ry="16" transform="rotate(-14 211 293)" fill="#1c2834" />
      <path d="M211 276q9 12 8 30" fill="none" stroke="#71869c" />
      <circle cx="211" cy="293" r="1.300" fill="#dfe8ef" />
      <path d="M240 297q8 1 16 12 13 20 15 46 0 24-9 26-11-2-20-21-12-25-11-48 2-12 9-15z" fill="url(#bore)" />
      <path d="M241 358q10 18 22 23" fill="none" stroke="#8496ae" strokeWidth="2" />
      <path d="M238 326l24-8q7 14 9 35l-22 7z" fill="url(#pin2)" />
      <path d="M188 345l37-12 14-6q10 10 9 30l-48 15-8-4z" fill="url(#pin)" />
      <path d="M238 327q12 6 11 32M242 328q10 10 8 30" fill="none" stroke="#91a4b9" strokeWidth="1.100" />
      <path d="M188 345q4-1 8 5 5 10 4 21-6 1-10-8-4-10-2-18z" fill="#243343" stroke="#5b6e83" strokeWidth=".6" />
      <circle cx="194" cy="358" r="1.500" fill="#e5edf4" />
      <path d="M262 202v-15l11-16 24-13q25-8 58-4 25 6 36 19 6 8 5 18l-94 35q-20-4-25-10z" fill="#0c1118" />
      <path d="M262 188l11-17 24-13q30-9 58-4 25 6 36 19 5 7 5 17-8-12-26-20-25-8-52-6-40 4-56 24z" fill="#2c3f51" />
      <path d="M337 164l-34 43 45-10 25-8-3-21q-15-5-33-4z" fill="url(#blade)" />
      <path d="M336 164l-36 45-3-2 35-43z" fill="#2b3743" />
      <path d="M370 169q20 9 25 22l-13 3-10-7z" fill="#33495f" />
      <path d="M370 169l2 18" stroke="#22303e" strokeWidth="3" />
      <path d="M332 200l18-9h14l-22 10z" fill="#11171e" />
      <path d="M347 198q15-9 28-11l8 7-28 8z" fill="url(#lobe)" />
      <path d="M281 217l17-1 10-9q20-7 54-8l-60 22-8 2z" fill="url(#lobe)" />
      <path d="M281 217l27 1M300 209l40-8" stroke="#38434f" fill="none" />
      <path d="M302 226l94-34q0 10-14 20-20 12-48 15z" fill="url(#lip)" />
      {[[215, 174], [363, 126], [444, 207], [297, 255]].map(([x, y]) => (
        <ellipse key={x} cx={x} cy={y} rx="9" ry="5" fill="url(#hole)" />
      ))}
      <path d="M480 227q8-1 14 14 6 15 6 45" fill="none" stroke="url(#glow)" strokeWidth="4" />
      <path d="M478 226l9 10M487 226l-9 10" stroke="#e81010" />
      <path d="M490 261l-12-11" stroke="#f00000" strokeWidth="2.500" />
      <path d="M469 241l13 4-6 8z" fill="#f00000" />
      <path d="M490 262V238" stroke="#00d800" strokeWidth="2.500" />
      <path d="M490 227l5 15h-10z" fill="#00e000" />
      <path d="M490 262l26-8" stroke="#1384e8" strokeWidth="2.500" />
      <path d="M529 249l-14 9-3-8z" fill="#0d74cf" />
      <path d="M494 213l4 5 4-5M498 218v4" fill="none" stroke="#00e000" />
      <path d="M528 235h8l-8 8h8" fill="none" stroke="#2090ff" />
    </svg>
  );
}

function PushButton({ children, disabled = false, className }: { children: ReactNode; disabled?: boolean; className: string }) {
  return (
    <button
      type="button"
      disabled={disabled}
      className={`h-[23px] shrink-0 text-center ${RAISED} ${className} ${disabled ? "text-[#808080] [text-shadow:1px_1px_0_#fff]" : ""}`}
    >
      {children}
    </button>
  );
}

function Group({ id, title, className, children }: { id: string; title: string; className: string; children?: ReactNode }) {
  return (
    <fieldset
      aria-labelledby={id}
      className={`h-[49px] border-x border-b border-[#808080] shadow-[1px_1px_0_#fff,inset_1px_0_0_#fff] ${className}`}
    >
      <div className="-mt-[6px] flex h-[14px] items-center leading-[14px]">
        <span className="h-[2px] w-[5px] border-t border-[#808080] border-b border-b-white" />
        <span id={id} className="px-[3px]">
          {title}
        </span>
        <span className="h-[2px] flex-1 border-t border-[#808080] border-b border-b-white" />
      </div>
      {children}
    </fieldset>
  );
}

function DesignVariables() {
  return (
    <section
      role="dialog"
      aria-labelledby="dv-title"
      className={`absolute left-[434px] top-[390px] w-[620px] border border-[#d4d0c8] bg-[#d4d0c8] text-[11px] shadow-[inset_1px_1px_0_#fff] ${SANS}`}
    >
      <h2
        id="dv-title"
        className={`m-[2px] h-[18px] bg-linear-to-r from-[#0a246a] to-[#a6caf0] pl-[1px] font-bold leading-[18px] text-white ${UI}`}
      >
        Design Variables
      </h2>
      <div className="px-[8px] pt-[6px]" role="tablist">
        <button
          type="button"
          role="tab"
          aria-selected="true"
          className="block h-[21px] w-[46px] rounded-t-[2px] border border-b-0 border-white border-r-[#404040] text-center shadow-[inset_-1px_0_0_#808080]"
        >
          Global
        </button>
      </div>
      <div className="mx-[8px] border border-white px-[7px] pt-[11px]">
        <div className="flex">
          <div className="w-[499px] shrink-0 border border-t-[#808080] border-l-[#808080] border-b-white border-r-white">
            <div className="grid grid-cols-[1fr_16px] grid-rows-[156px_16px] border border-t-[#404040] border-l-[#404040] border-r-transparent border-b-transparent">
              <div className="overflow-hidden bg-white">
                <table className={`w-full table-fixed border-collapse text-left ${UI}`}>
                  <colgroup>
                    <col className="w-[25px]" />
                    <col className="w-[25px]" />
                    <col className="w-[25px]" />
                    <col className="w-[90px]" />
                    <col className="w-[85px]" />
                    <col className="w-[105px]" />
                    <col />
                  </colgroup>
                  <thead>
                    <tr className="h-[18px]">
                      {["T", "", "U", "Name", "Value", "Equation", "Comment"].map((h, i) => (
                        <th key={i} scope="col" className={`bg-[#d4d0c8] p-0 pl-[5px] font-normal leading-[17px] shadow-[inset_1px_1px_0_#fff,inset_-1px_-1px_0_#404040,inset_-2px_-2px_0_#808080] ${SANS}`}>
                          {h}
                        </th>
                      ))}
                    </tr>
                  </thead>
                  <tbody>
                    {ROWS.map(([name, value, eq], i) => (
                      <tr
                        key={name}
                        className={
                          i === 0
                            ? "h-[14px] bg-[#0a246a] text-white outline outline-dotted outline-1 -outline-offset-1 outline-[#f5db95]"
                            : "h-[14px] text-black"
                        }
                      >
                        <td />
                        <td />
                        <td className={`p-0 pl-[6px] leading-[14px] ${i ? "text-[#808080]" : ""}`}>U</td>
                        <td className="p-0 pl-[3px] leading-[14px]">{name}</td>
                        <td className={`p-0 pl-[3px] leading-[14px] ${i ? "text-[#808080]" : ""}`}>{value}</td>
                        <td className="p-0 pl-[3px] leading-[14px]">{eq}</td>
                        <td />
                      </tr>
                    ))}
                  </tbody>
                </table>
              </div>
              <div className={`flex flex-col ${CHECKER}`}>
                <ArrowButton dir="up" label="Scroll up" className="size-4" />
                <div className={`h-[50px] ${RAISED}`} />
                <ArrowButton dir="down" label="Scroll down" className="mt-auto size-4" />
              </div>
              <div className={`flex ${CHECKER}`}>
                <ArrowButton dir="left" label="Scroll left" className="size-4" />
                <div className={`w-[433px] ${RAISED}`} />
                <ArrowButton dir="right" label="Scroll right" className="ml-auto size-4" />
              </div>
            </div>
          </div>
          <div className="ml-[15px] flex flex-col gap-[10px] pt-[18px]">
            <PushButton className="w-[83px]">New...</PushButton>
            <PushButton className="w-[83px]">Delete</PushButton>
            <PushButton className="w-[83px]">Purge</PushButton>
          </div>
        </div>
        <div className="-ml-[1px] flex gap-[3px] pt-[16px]">
          <Group id="grp-table" title="Table Driven (T)" className="w-[333px] shrink-0">
            <div className="flex items-center pl-[4px] pt-[8px]">
              <label htmlFor="ver" className="w-[76px] whitespace-nowrap">
                Active Version:
              </label>
              <span className="grid h-[21px] w-[163px] grid-cols-[1fr_17px] border-2 border-t-[#808080] border-l-[#808080] border-b-white border-r-white">
                <select id="ver" disabled className="col-span-2 col-start-1 row-start-1 w-full appearance-none" />
                <span className={`pointer-events-none col-start-2 row-start-1 flex items-center justify-center ${RAISED}`}>
                  <svg viewBox="0 0 9 5" className="h-[5px] w-[9px]" aria-hidden="true">
                    <path d="M1 0h7L4.500 4z" fill="#808080" />
                  </svg>
                </span>
              </span>
              <PushButton className="ml-[8px] w-[75px]">Setup...</PushButton>
            </div>
          </Group>
          <Group id="grp-copy" title="Copy to Active Part" className="flex-1">
            <div className="flex gap-[7px] pl-[5px] pt-[8px]">
              <PushButton disabled className="w-[83px]">Selected</PushButton>
              <PushButton disabled className="w-[83px]">Referenced</PushButton>
              <PushButton disabled className="w-[83px]">All</PushButton>
            </div>
          </Group>
        </div>
        <div className="-ml-[1px] flex gap-[3px] pt-[16px]">
          <Group id="grp-file" title="Global Variable File (.prm)" className="w-[333px] shrink-0" />
          <Group id="grp-linked" title="Linked File" className="flex-1 text-[#808080] [text-shadow:1px_1px_0_#fff]" />
        </div>
      </div>
    </section>
  );
}

const winBtn = `flex h-[14px] items-center justify-center ${RAISED}`;

export default function App() {
  return (
    <div className={`relative flex h-screen flex-col overflow-hidden bg-[#d4d0c8] text-[11px] text-black ${SANS}`}>
      <header className="flex h-[22px] shrink-0 items-center border-t border-[#a0a0a0] pl-[4px] pr-[4px]">
        <Icon name="app" size="size-[17px]" />
        <nav className={`ml-[5px] flex gap-[11px] text-[#808080] ${UI}`}>
          {MENUS.map((m) => (
            <button key={m} type="button">
              {m}
            </button>
          ))}
        </nav>
        <div className="ml-auto flex">
          <button type="button" aria-label="Minimize" className={`${winBtn} w-[16px]`}>
            <svg viewBox="0 0 10 10" className="size-[10px]"><path d="M1 8h6" stroke="#000" strokeWidth="2" /></svg>
          </button>
          <button type="button" aria-label="Restore" className={`${winBtn} w-[16px]`}>
            <svg viewBox="0 0 10 10" className="size-[10px]">
              <path d="M3.500 3V1.500h5v4H7M1.500 4.500h5v4h-5z" fill="none" stroke="#000" />
              <path d="M3 1h6M1 4h6" stroke="#000" strokeWidth="2" />
            </svg>
          </button>
          <button type="button" aria-label="Close" className={`${winBtn} ml-[2px] w-[16px]`}>
            <svg viewBox="0 0 10 10" className="size-[10px]"><path d="M1 1l7 7M8 1L1 8" stroke="#000" strokeWidth="1.500" /></svg>
          </button>
        </div>
      </header>

      <div className="flex h-[28px] shrink-0">
        <Bar>
          <Tools items={FILE_TOOLS} />
          <div className="grid h-[22px] w-[299px] grid-cols-[1fr_16px] border-2 border-t-[#606060] border-l-[#606060] border-b-white border-r-white">
            <div className="flex min-w-0 items-center">
              <Icon name="bulb" />
              <Icon name="sun" />
              <Icon name="freeze" />
              <span className="ml-[2px] flex gap-[1px]">
                <Icon name="unlock" size="size-[14px]" />
                <Icon name="green" size="size-[15px]" />
              </span>
              <select aria-label="Layer" className={`ml-[3px] min-w-0 flex-1 appearance-none text-[12px] text-[#808080] ${UI}`}>
                <option>AM_4</option>
              </select>
            </div>
            <span className={`pointer-events-none flex items-center justify-center ${RAISED}`}>
              <svg viewBox="0 0 9 5" className="h-[5px] w-[9px]" aria-hidden="true"><path d="M1 0h7L4.500 4z" fill="#808080" /></svg>
            </span>
          </div>
          <Sep />
          <button type="button" aria-label="Undo" className="flex h-[23px] w-[24px] items-center justify-center"><Icon name="undo" /></button>
          <button type="button" aria-label="Undo history" className="flex h-[23px] w-[12px] items-center justify-center">
            <svg viewBox="0 0 5 4" className="h-[4px] w-[5px]"><path d="M0 0h5L2.500 3z" fill="#a9adb6" /></svg>
          </button>
          <button type="button" aria-label="Redo" className="flex h-[23px] w-[23px] items-center justify-center"><Icon name="redo" /></button>
          <button type="button" aria-label="Redo history" className="flex h-[23px] w-[14px] items-center justify-center">
            <svg viewBox="0 0 5 4" className="h-[4px] w-[5px]"><path d="M0 0h5L2.500 3z" fill="#a9adb6" /></svg>
          </button>
          <Tools items={MAIN_TOOLS} />
        </Bar>
        <Bar>
          <Tools items={VIEW_TOOLS} />
        </Bar>
      </div>
      <div className="flex h-[27px] shrink-0">
        <Bar>
          <Tools items={CONSTRAINTS} crisp />
        </Bar>
      </div>

      <main className="flex min-h-0 flex-1 pt-[1px]">
        <aside className="flex w-[112px] shrink-0 border-t border-white">
          <div className="flex w-[106px] flex-col">
            <div className="flex h-[23px] items-start pl-[5px] pt-[2px]">
              <div className="w-[81px] pt-[3px]">
                <GripH />
              </div>
              <button type="button" aria-label="Close browser" className={`ml-[2px] flex size-[12px] items-center justify-center ${RAISED}`}>
                <svg viewBox="0 0 8 8" className="size-[8px]"><path d="M1 1l5 5M6 1L1 6" stroke="#000" strokeWidth="1.500" /></svg>
              </button>
            </div>
            <div role="tablist" className={`flex flex-col pl-[9px] pr-[11px] ${UI}`}>
              {["Scene", "Drawing"].map((t) => (
                <button key={t} type="button" role="tab" aria-selected="false" className="mx-[2px] h-[19px] rounded-t-[3px] border border-b-0 border-white border-r-[#404040] shadow-[inset_-1px_0_0_#808080]">
                  {t}
                </button>
              ))}
            </div>
            <div className={`-mt-[1px] ml-[9px] mr-[10px] flex min-h-0 flex-1 flex-col rounded-t-[3px] px-[3px] pb-[2px] ${RAISED}`}>
              <button type="button" role="tab" aria-selected="true" className={`h-[20px] w-[74px] pb-[2px] ${UI}`}>
                Model
              </button>
              <div className={`min-h-0 flex-1 border border-black bg-white pl-[9px] pt-[1px] ${UI}`}>
                <div className="flex h-[17px] items-center">
                  <button type="button" aria-label="Expand" className="flex size-[9px] items-center justify-center">
                    <svg viewBox="0 0 9 9" className="size-[9px] [shape-rendering:crispEdges]">
                      <path d="M.5.5h8v8h-8zM2 4.500h5M4.500 2v5" fill="none" stroke="#000" />
                    </svg>
                  </button>
                  <span className="w-[7px] border-t border-dotted border-[#808080]" />
                  <Icon name="app" />
                  <span className="whitespace-nowrap bg-[#0a246a] pl-[1px] pr-[1px] leading-[16px] text-white">X-000</span>
                </div>
              </div>
            </div>
            <div className="mb-[4px] ml-[1px] mt-[14px] flex h-[21px] shrink-0 items-center gap-[6px] overflow-hidden bg-[#c0c0c0] pl-[2px]">
              <Icon name="slab" crisp />
              <Icon name="app" size="size-[17px]" />
              <Icon name="browserTable" size="size-[20px]" />
              <Icon name="yellowDoc" />
              <Icon name="magnify" size="size-[20px]" />
            </div>
          </div>
          <div className="flex-1 border-l-2 border-white border-r border-r-[#202020]" />
        </aside>

        <div className="flex w-[26px] shrink-0 flex-col justify-between pb-[15px]">
          <Column items={PART_TOOLS} crisp />
          <Column items={CONTENT_TOOLS} crisp />
        </div>

        <div className="flex min-w-0 flex-1 flex-col border-l border-t border-[#606060]">
          <div className="flex min-h-0 flex-1">
            <div className="min-h-0 min-w-0 flex-1 overflow-hidden bg-black">
              <Model3D />
            </div>
            <div className={`w-4 shrink-0 ${CHECKER}`}>
              <ArrowButton dir="up" label="Scroll view up" className="size-4" />
            </div>
          </div>
          <div className={`flex h-[15px] shrink-0 ${UI}`}>
            <ArrowButton dir="first" label="First layout" className="h-[15px] w-[18px]" />
            <ArrowButton dir="prev" label="Previous layout" className="h-[15px] w-[18px]" />
            <ArrowButton dir="next" label="Next layout" className="h-[15px] w-[18px]" />
            <ArrowButton dir="last" label="Last layout" className="h-[15px] w-[18px]" />
            <button type="button" className="ml-[4px] h-[15px] w-[45px] bg-black leading-[14px] text-white [clip-path:polygon(0_0,100%_0,39px_100%,6px_100%)]">
              Model
            </button>
            <button type="button" className="grid h-[15px] w-[38px] leading-[14px]">
              <svg viewBox="0 0 38 15" className="col-start-1 row-start-1 h-[15px] w-[38px] overflow-visible" aria-hidden="true">
                <path d="M-3 8l3 6.500h33L38 0M-5 14L0 0" fill="none" stroke="#000" />
              </svg>
              <span className="col-start-1 row-start-1">x-000</span>
            </button>
          </div>
        </div>

        <div className="ml-[2px] flex shrink-0 overflow-hidden">
          <Column items={MODIFY_TOOLS} />
          <Column items={DRAW_TOOLS} />
          <span className="w-[2px]" />
        </div>
      </main>

      <footer className="shrink-0 border-t-2 border-white pt-[4px]">
        <div className="flex h-[40px] border-t-2 border-[#303030] pt-[4px] shadow-[inset_0_1px_0_#808080]">
          <div className="flex w-[18px] shrink-0 gap-[1px] pl-[7px] pt-[3px]" aria-hidden="true">
            <span className="h-[26px] w-[4px] border border-t-white border-l-white border-r-[#808080] border-b-[#808080]" />
            <span className="h-[26px] w-[4px] border border-t-white border-l-white border-r-[#808080] border-b-[#808080]" />
          </div>
          <div className="flex flex-1 flex-col border-l-2 border-t-2 border-[#404040] bg-white font-['Liberation_Mono',monospace] text-[13px]">
            <p className="h-[15px] border-b border-[#808080] leading-[14px]">Command:</p>
            <input aria-label="Command line" className="h-[16px] w-full outline-none" />
          </div>
        </div>
        <div className="flex h-[29px] items-start border-t border-[#808080] pt-[4px] shadow-[inset_0_1px_0_#fff]">
          <span className="w-[79px] shrink-0 whitespace-nowrap pl-[9px] leading-[18px]">Target: X-000</span>
          <output className="h-[19px] w-[238px] shrink-0 border border-[#808080] pl-[1px] leading-[17px]">
            -136.7941, 199.2705, 0.0000
          </output>
          {["SNAP", "GRID", "ORTHO"].map((s) => (
            <button key={s} type="button" className="ml-[4px] h-[19px] border border-t-white border-l-white border-r-[#808080] border-b-[#808080] px-px leading-[17px]">
              {s}
            </button>
          ))}
        </div>
      </footer>

      <DesignVariables />
    </div>
  );
}
